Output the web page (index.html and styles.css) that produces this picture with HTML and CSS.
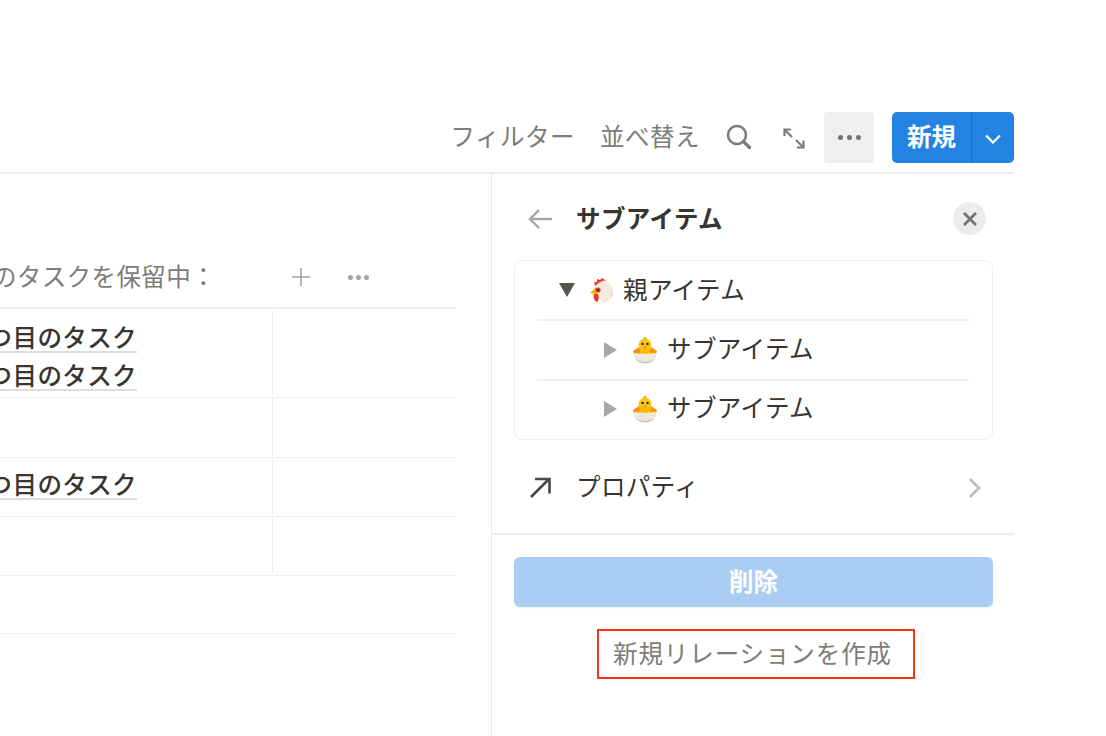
FILE: index.html
```html
<!DOCTYPE html>
<html lang="ja">
<head>
<meta charset="utf-8">
<title>サブアイテム</title>
<link rel="stylesheet" href="styles.css">
</head>
<body>
<div class="page">
  <header class="toolbar">
    <span class="tool-text tool-filter">フィルター</span>
    <span class="tool-text tool-sort">並べ替え</span>
    <svg class="icon-search" width="26" height="26" viewBox="0 0 26 26"><circle cx="11" cy="11" r="9" fill="none" stroke="#7d7c78" stroke-width="2.6"/><path d="M17.500 17.500l6 6" stroke="#7d7c78" stroke-width="3.2" stroke-linecap="round"/></svg>
    <svg class="icon-expand" width="24" height="24" viewBox="0 0 24 24" fill="none" stroke="#7d7c78" stroke-width="2.2"><path d="M3 4l7 7"/><path d="M2.500 10V3.500H9"/><path d="M14 14l7 7"/><path d="M21.500 14.500v7H15"/></svg>
    <button class="more-btn"><span class="dots"><i></i><i></i><i></i></span></button>
    <div class="new-btn">
      <span class="new-label">新規</span>
      <span class="new-caret"><svg width="18" height="10" viewBox="0 0 18 10" fill="none" stroke="#fff" stroke-width="2.2"><path d="M2 1.500l7 7 7-7"/></svg></span>
    </div>
  </header>
  <main class="main">
    <section class="board">
      <div class="board-head">
        <span class="board-title">のタスクを保留中：</span>
        <svg class="icon-plus" width="20" height="20" viewBox="0 0 20 20" stroke="#a5a4a1" stroke-width="1.6"><path d="M10 1v18M1 10h18"/></svg>
        <span class="dots dots-small"><i></i><i></i><i></i></span>
      </div>
      <div class="row row-1">
        <div class="cell-name">
          <span class="task">1つ目のタスク</span>
          <span class="task">2つ目のタスク</span>
        </div>
        <div class="cell-side"></div>
      </div>
      <div class="row row-2"><div class="cell-name"></div><div class="cell-side"></div></div>
      <div class="row row-3">
        <div class="cell-name"><span class="task">3つ目のタスク</span></div>
        <div class="cell-side"></div>
      </div>
      <div class="row row-4"><div class="cell-name"></div><div class="cell-side"></div></div>
      <div class="row row-5"></div>
    </section>
    <aside class="panel">
      <div class="panel-body">
        <div class="panel-head">
          <svg class="icon-back" width="26" height="22" viewBox="0 0 26 22" fill="none" stroke="#a5a4a1" stroke-width="2.4"><path d="M25 11H3"/><path d="M12 2l-9 9 9 9"/></svg>
          <strong class="panel-title">サブアイテム</strong>
          <span class="close"><svg width="16" height="16" viewBox="0 0 16 16" stroke="#73726e" stroke-width="2.800"><path d="M2 2l12 12M14 2L2 14"/></svg></span>
        </div>
        <div class="tree">
          <div class="tree-row tree-parent">
            <span class="tri-down"></span>
            <svg class="emoji-hen" width="24" height="25" viewBox="0 0 24 25">
              <path d="M7 7c3-5 11-5 14-1 3 4 3 11 1 14-3 4-9 4-12 1-3-3-4-9-3-14z" fill="#f6ecdc"/>
              <path d="M21 21c2-2 2-7 1-11 2 4 2 9-1 11-2 2-5 3-8 2 3 0 6 0 8-2z" fill="#c9bba3"/>
              <path d="M6 8L5 4l3 0 0-3 3 1 2-2 3 2 3 0c-5 0-9 2-13 6z" fill="#ee3b2e"/>
              <path d="M7 9L1 15l7 2z" fill="#f5b400"/>
              <path d="M5 16c-1 3 0 7 3 8 2-1 2-5 1-8z" fill="#e8342a"/>
              <circle cx="9" cy="12" r="2.600" fill="#e8342a"/>
              <circle cx="9" cy="12" r="1.100" fill="#222"/>
            </svg>
            <span class="tree-label tree-label-parent">親アイテム</span>
          </div>
          <div class="tree-row tree-child">
            <span class="tri-right"></span>
            <svg class="emoji-chick" width="26" height="27" viewBox="0 0 26 27">
              <path d="M12 0h2l.5 3h-3z" fill="#f59a0b"/>
              <circle cx="13" cy="8" r="6.500" fill="#fdc70f"/>
              <path d="M7 11h12l2 6H5z" fill="#fdb90c"/>
              <path d="M7 10L1 14l1 3 6-2zM19 10l6 4-1 3-6-2z" fill="#f7930e"/>
              <circle cx="10.500" cy="7" r="1.300" fill="#333"/><circle cx="15.500" cy="7" r="1.300" fill="#333"/>
              <path d="M11.500 9.500h3L13 11.500z" fill="#ee6c00"/>
              <path d="M2 16l4 2 3-2 4 2 4-2 3 2 4-2c1 6-4 11-11 11S1 22 2 16z" fill="#ece7db"/>
              <path d="M4 22c3 4 15 4 18 0-2 5-16 5-18 0z" fill="#b5ae9e"/>
            </svg>
            <span class="tree-label">サブアイテム</span>
          </div>
          <div class="tree-row tree-child">
            <span class="tri-right"></span>
            <svg class="emoji-chick" width="26" height="27" viewBox="0 0 26 27">
              <path d="M12 0h2l.5 3h-3z" fill="#f59a0b"/>
              <circle cx="13" cy="8" r="6.500" fill="#fdc70f"/>
              <path d="M7 11h12l2 6H5z" fill="#fdb90c"/>
              <path d="M7 10L1 14l1 3 6-2zM19 10l6 4-1 3-6-2z" fill="#f7930e"/>
              <circle cx="10.500" cy="7" r="1.300" fill="#333"/><circle cx="15.500" cy="7" r="1.300" fill="#333"/>
              <path d="M11.500 9.500h3L13 11.500z" fill="#ee6c00"/>
              <path d="M2 16l4 2 3-2 4 2 4-2 3 2 4-2c1 6-4 11-11 11S1 22 2 16z" fill="#ece7db"/>
              <path d="M4 22c3 4 15 4 18 0-2 5-16 5-18 0z" fill="#b5ae9e"/>
            </svg>
            <span class="tree-label">サブアイテム</span>
          </div>
        </div>
        <div class="prop-row">
          <svg class="icon-link" width="22" height="22" viewBox="0 0 22 22" fill="none" stroke="#4a4946" stroke-width="2.600"><path d="M2 20L20 2"/><path d="M6 2h14.500v14.500"/></svg>
          <span class="prop-label">プロパティ</span>
          <svg class="icon-chevron" width="13" height="22" viewBox="0 0 13 22" fill="none" stroke="#bcbbb8" stroke-width="2.600"><path d="M2 2l9 9-9 9"/></svg>
        </div>
      </div>
      <div class="panel-foot">
        <button class="delete-btn">削除</button>
        <div class="create-box">新規リレーションを作成</div>
      </div>
    </aside>
  </main>
</div>
</body>
</html>
```

FILE: styles.css
```css
* { box-sizing: border-box; }
html, body { margin: 0; height: 100%; background: #fff; overflow: hidden; }
body {
  font-family: "Noto Sans CJK JP", "Liberation Sans", sans-serif;
  font-size: 24.5px;
  color: #37352f;
}
.page { width: 1014px; height: 736px; padding-top: 112px; display: flex; flex-direction: column; }

.toolbar { height: 51px; flex: none; display: flex; align-items: center; justify-content: flex-end; }
.tool-text { color: #7d7c78; letter-spacing: 0.5px; line-height: 47px; height: 47px; margin-bottom: 4px; white-space: nowrap; }
.tool-filter { margin-right: 25px; }
.tool-sort { margin-right: 26px; }
.icon-search { margin-right: 30px; margin-top: -2px; }
.icon-expand { margin-right: 18px; }
.more-btn { width: 50px; height: 51px; padding: 0; border: 0; border-radius: 4px; background: #efefef; display: flex; align-items: center; justify-content: center; margin-right: 18px; }
.dots { display: flex; gap: 4px; }
.dots i { width: 5px; height: 5px; border-radius: 50%; background: #73726e; display: block; }
.dots-small i { background: #a5a4a1; }
.new-btn { width: 122px; height: 51px; background: #2383e2; border-radius: 5px; display: flex; color: #fff; }
.new-label { width: 80px; text-align: center; line-height: 48px; font-weight: 700; border-right: 1px solid #1a6cc0; }
.new-caret { flex: 1; display: flex; align-items: center; justify-content: center; padding-top: 2px; }

.main { margin-top: 9px; border-top: 2px solid #ececec; flex: 1; display: flex; min-height: 0; }

.board { width: 456px; margin-right: 35px; flex: none; overflow: hidden; }
.board-head { height: 135px; border-bottom: 2px solid #eeeeee; display: flex; align-items: flex-end; padding-bottom: 11px; }
.board-title { width: 216px; flex: none; display: flex; justify-content: flex-end; white-space: nowrap; color: #7d7c78; letter-spacing: 0.4px; line-height: 36px; padding-bottom: 2px; }
.icon-plus { margin-left: 75px; margin-bottom: 9px; }
.dots-small { margin-left: 37px; margin-bottom: 16px; gap: 3px; }

.row { display: flex; border-bottom: 1px solid #eeeeee; }
.row-1 { height: 89px; }
.row-2 { height: 60px; }
.row-3 { height: 59px; }
.row-4 { height: 59px; }
.row-5 { height: 58px; }
.cell-name { width: 273px; flex: none; margin: 0 0 2px; padding: 8px 135px 0 0; border-right: 1px solid #eeeeee; display: flex; flex-direction: column; align-items: flex-end; gap: 4px; }
.row-1 .cell-name { margin-top: 2px; }
.task { white-space: nowrap; font-weight: 500; line-height: 36px; height: 34px; border-bottom: 2px solid #dddddb; letter-spacing: 0.4px; display: block; }

.panel { flex: 1; border-left: 1px solid #e9e9e9; display: flex; flex-direction: column; }
.panel-body { height: 361px; flex: none; padding: 0 21px 0 22px; border-bottom: 2px solid #eeeeee; }
.panel-head { height: 86px; display: flex; align-items: center; padding-left: 13px; padding-top: 3px; }
.icon-back { margin-right: 23px; }
.panel-title { flex: 1; font-weight: 700; letter-spacing: 0.4px; margin-bottom: 3px; }
.close { width: 33px; height: 33px; border-radius: 50%; background: #ececec; display: flex; align-items: center; justify-content: center; margin-right: 7px; }

.tree { width: 479px; height: 180px; border: 1px solid #eeeeee; border-radius: 8px; padding: 0 23px 0 22px; }
.tree-row { height: 60px; display: flex; align-items: center; }
.tree-row + .tree-row { border-top: 2px solid #eeeeee; }
.tree-parent { height: 58px; padding-left: 22px; }
.tree-child { padding-left: 67px; }
.tree-child:last-child { padding-bottom: 2px; }
.tri-down { width: 0; height: 0; border-left: 8px solid transparent; border-right: 8px solid transparent; border-top: 14px solid #55544f; margin-right: 14px; }
.tri-right { width: 0; height: 0; border-top: 8px solid transparent; border-bottom: 8px solid transparent; border-left: 13px solid #a9a8a5; margin-right: 15px; }
.emoji-hen { margin-right: 10px; }
.emoji-chick { margin-right: 9px; }
.tree-label { letter-spacing: 0.4px; line-height: 36px; margin-bottom: 4px; }
.tree-label-parent { margin-bottom: 2px; }

.prop-row { height: 92px; display: flex; align-items: center; padding: 3px 12px 0 15px; }
.icon-link { margin-right: 25px; }
.prop-label { flex: 1; letter-spacing: 0.4px; margin-bottom: 4px; }

.panel-foot { padding: 22px 21px 0 22px; display: flex; flex-direction: column; align-items: center; }
.delete-btn { width: 479px; height: 50px; border: 0; border-radius: 6px; background: #abcdf3; color: #fff; font: 700 24.5px "Noto Sans CJK JP", sans-serif; padding: 0 0 3px; box-shadow: 0 1px 2px rgba(0,0,0,.06); }
.create-box { margin-top: 22px; margin-left: 5px; width: 318px; height: 50px; border: 2px solid #f43414; color: #7d7c78; display: flex; align-items: center; justify-content: center; letter-spacing: 0.9px; white-space: nowrap; padding: 0 7px 3px 0; }
```
